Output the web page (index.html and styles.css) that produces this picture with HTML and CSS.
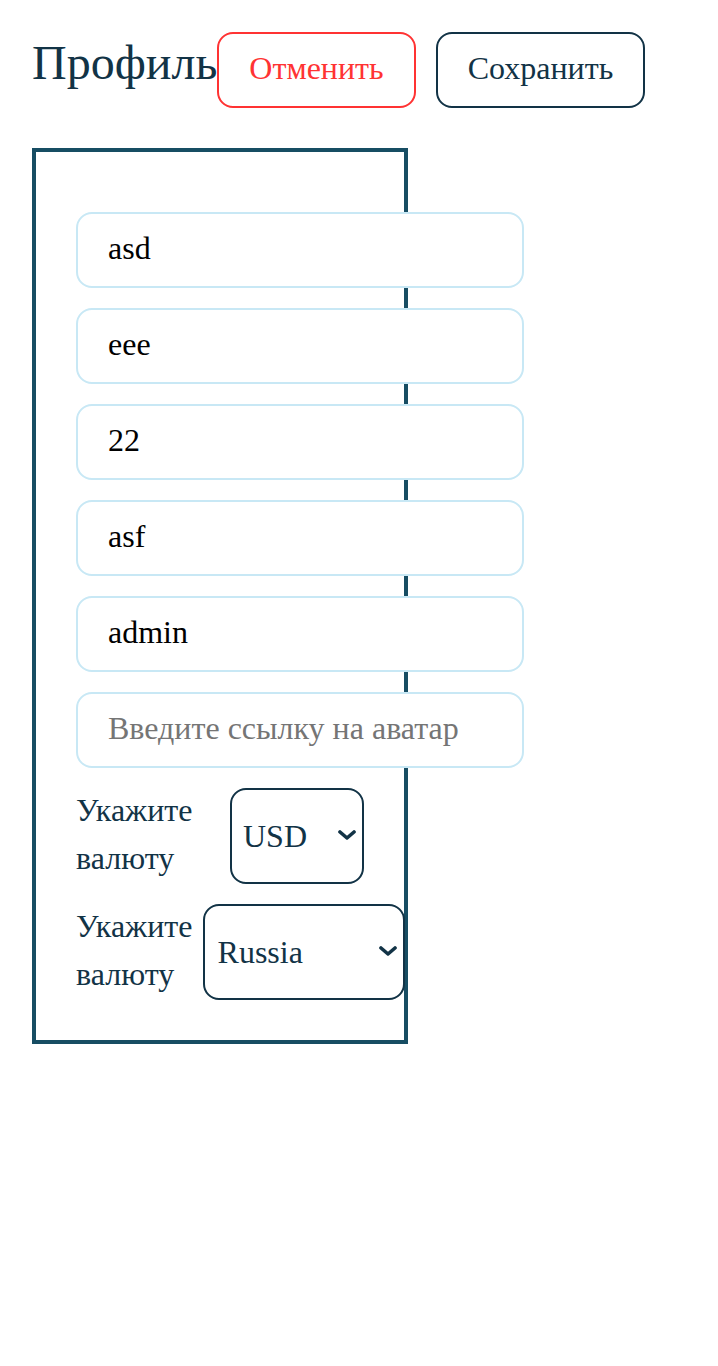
FILE: index.html
```html
<!DOCTYPE html>
<html>
<head>
<meta charset="utf-8">
<title>Профиль</title>
<link rel="stylesheet" href="styles.css">
</head>
<body>
<div class="page">
  <header class="header">
    <h1 class="title">Профиль</h1>
    <button class="btn btn-cancel">Отменить</button>
    <button class="btn btn-save">Сохранить</button>
  </header>
  <form class="card">
    <input class="field" type="text" value="asd">
    <input class="field" type="text" value="eee">
    <input class="field" type="text" value="22">
    <input class="field" type="text" value="asf">
    <input class="field" type="text" value="admin">
    <input class="field" type="text" placeholder="Введите ссылку на аватар">
    <div class="row">
      <label class="label">Укажите валюту</label>
      <span class="select-wrap">
        <select class="select select-currency">
          <option>USD</option>
          <option>EUR</option>
          <option>RUB</option>
        </select>
        <svg class="chevron" viewBox="0 0 18 10" width="18" height="10" aria-hidden="true"><path d="M2 2 L9 8 L16 2" fill="none" stroke="#123346" stroke-width="3.6" stroke-linecap="round" stroke-linejoin="round"/></svg>
      </span>
    </div>
    <div class="row">
      <label class="label">Укажите валюту</label>
      <span class="select-wrap">
        <select class="select select-country">
          <option>Russia</option>
          <option>Belarus</option>
          <option>Ukraine</option>
        </select>
        <svg class="chevron" viewBox="0 0 18 10" width="18" height="10" aria-hidden="true"><path d="M2 2 L9 8 L16 2" fill="none" stroke="#123346" stroke-width="3.6" stroke-linecap="round" stroke-linejoin="round"/></svg>
      </span>
    </div>
  </form>
</div>
</body>
</html>
```

FILE: styles.css
```css
* { box-sizing: border-box; }
html, body { margin: 0; padding: 0; background: #fff; }
body, input, select, button, label {
  font-family: "Liberation Serif", "Times New Roman", serif;
}
body { color: #123346; }
.page { padding: 32px; }
.header { display: flex; align-items: baseline; }
.title { margin: 0; font-size: 48px; font-weight: 400; color: #123346; }
.btn {
  font-size: 32px;
  background: #fff;
  border: 2px solid #123346;
  border-radius: 16px;
  padding: 16px 30px 20px;
  line-height: 36px;
  cursor: pointer;
}
.btn-cancel { border-color: #ff3333; color: #ff3333; }
.btn-save { margin-left: 20px; color: #123346; }
.card {
  margin-top: 40px;
  width: 376px;
  border: 4px solid #174d63;
  padding: 40px;
  display: flex;
  flex-direction: column;
  gap: 20px;
}
.card::before { content: ""; display: block; height: 0; }
.field {
  width: 448px;
  height: 76px;
  flex: none;
  border: 2px solid #c8e8f5;
  border-radius: 16px;
  padding: 0 30px 4px;
  font-size: 32px;
  color: #000;
  background: #fff;
  outline: none;
}
.field::placeholder { color: #757575; }
.row { display: flex; align-items: stretch; }
.label { flex: 1 1 0; font-size: 32px; line-height: 48px; margin-top: -2px; color: #123346; }
.select-wrap { position: relative; display: flex; flex: none; margin-left: 10px; }
.select {
  appearance: none;
  -webkit-appearance: none;
  height: 96px;
  font-size: 32px;
  color: #123346;
  background-color: #fff;
  border: 2px solid #123346;
  border-radius: 16px;
  padding: 0 30px 0 11px;
}
.chevron { position: absolute; right: 8px; top: 50%; margin-top: -6px; pointer-events: none; }
.select-currency { width: 134px; }
.select-country { width: 202px; padding-left: 13px; }
```
